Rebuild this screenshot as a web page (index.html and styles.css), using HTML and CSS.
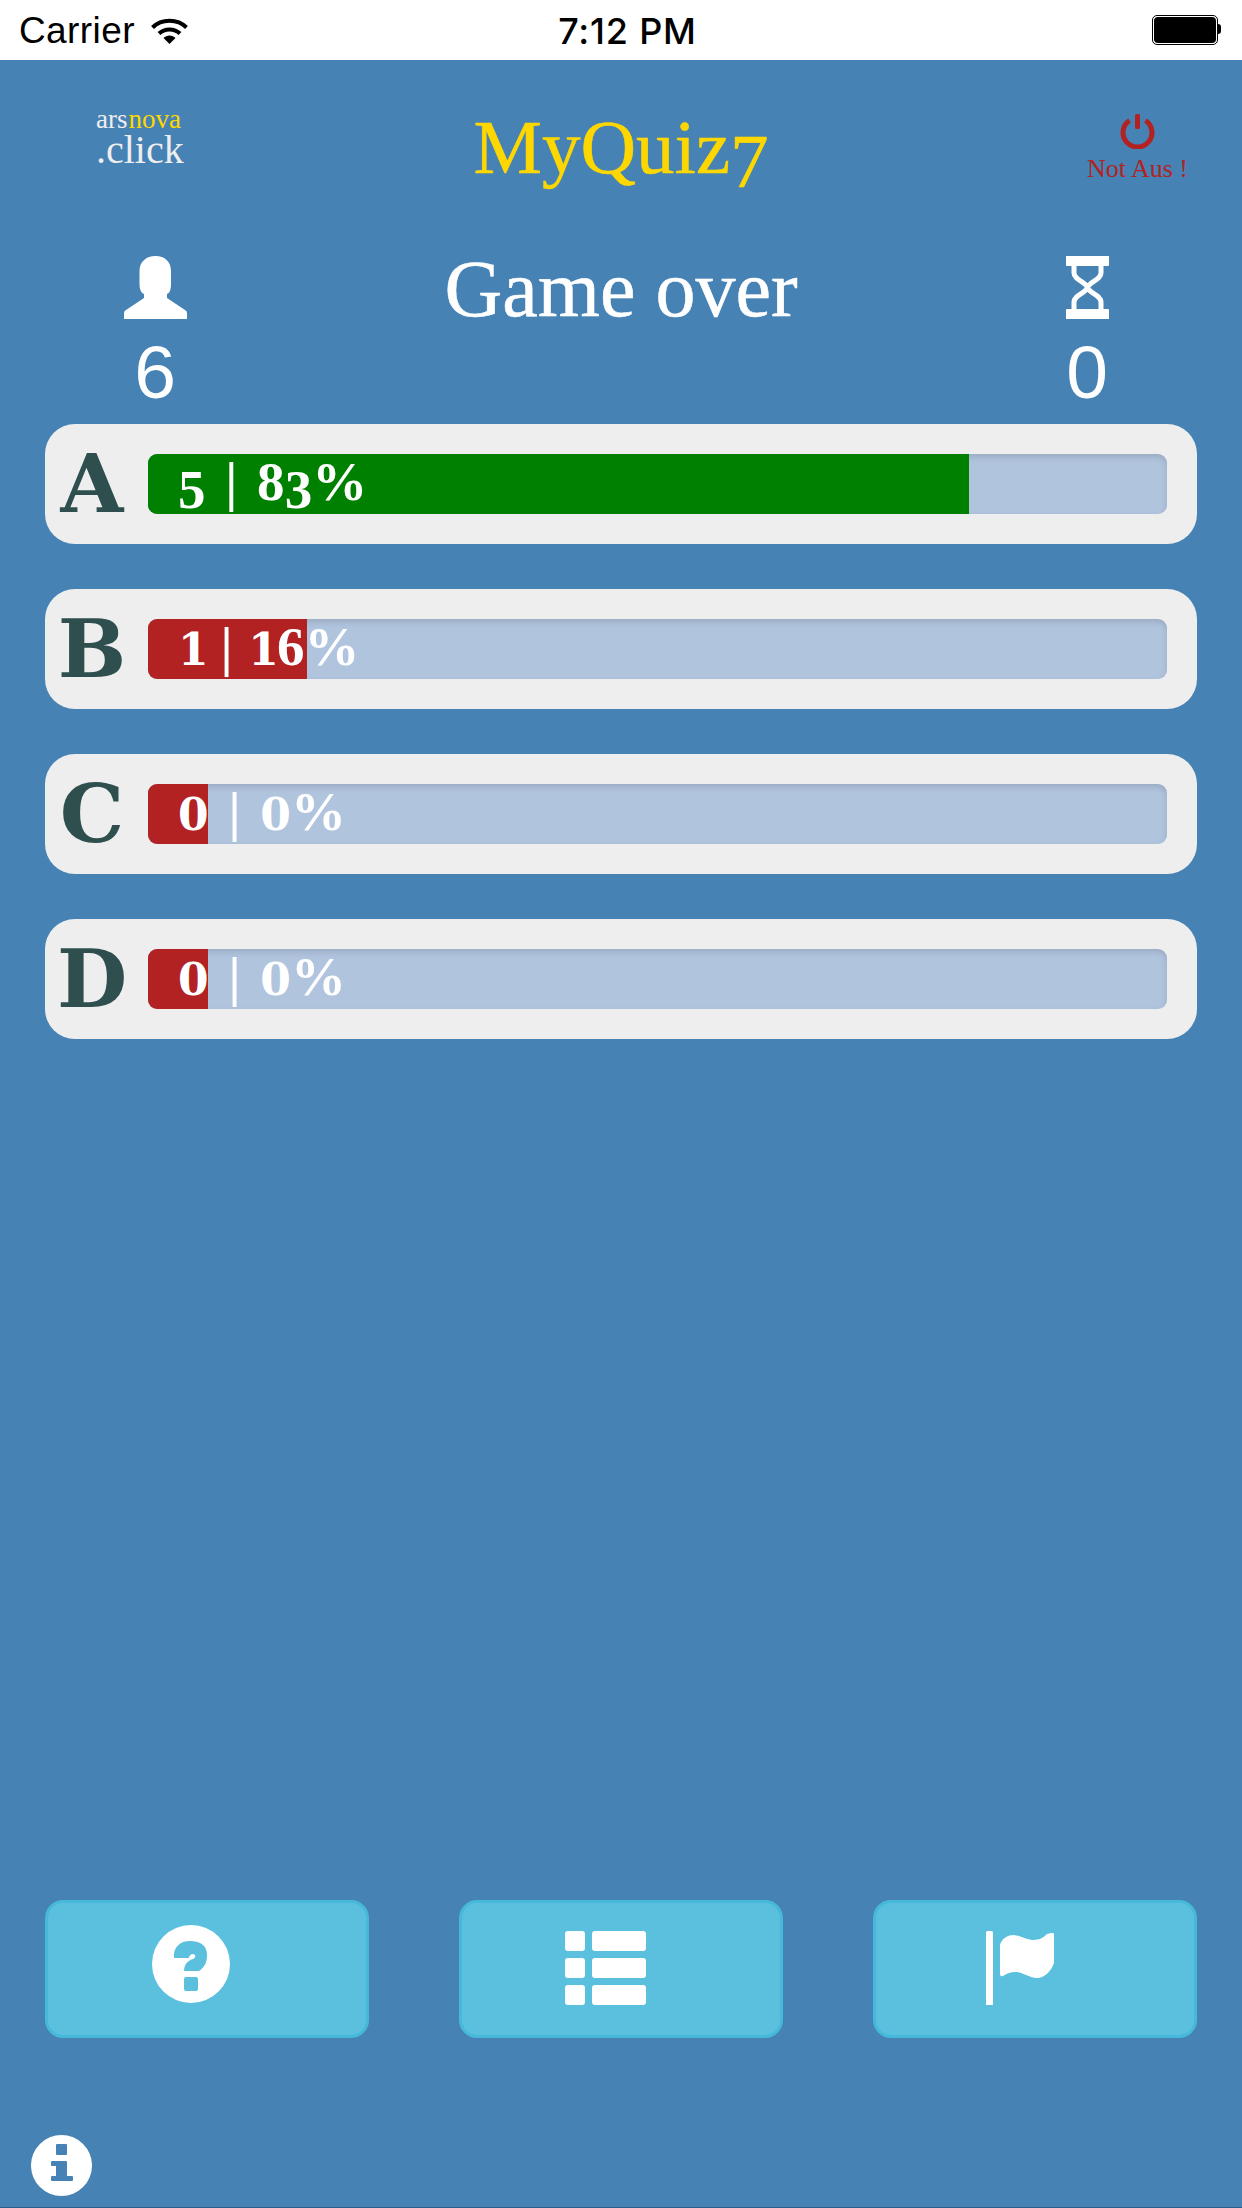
FILE: index.html
```html
<!DOCTYPE html>
<html lang="en">
<head>
    <meta charset="UTF-8">
    <meta name="viewport" content="width=device-width, initial-scale=1.0">
    <title>MyQuiz7</title>
    <link rel="stylesheet" href="styles.css">
</head>
<body>
    <div class="statusbar">
        <div class="carrier">
            <span>Carrier</span>
            <svg class="wifi" width="37" height="27" viewBox="0 0 37 27">
                <path d="M1.5 10.5C10.5 1.5 26.5 1.5 35.5 10.5" fill="none" stroke="#000" stroke-width="4"/>
                <path d="M8 16.5C13.5 11 23.5 11 29 16.5" fill="none" stroke="#000" stroke-width="4"/>
                <path d="M12.5 21C15.5 17.5 21.5 17.5 24.5 21L18.5 27Z" fill="#000"/>
            </svg>
        </div>
        <div class="time">7:12 PM</div>
        <div class="battery"><div class="battery-level"></div></div>
    </div>

    <div class="header">
        <div class="logo">
            <div class="logo-top">ars<span class="logo-nova">nova</span></div>
            <div class="logo-bottom">.click</div>
        </div>
        <h1 class="title">MyQuiz<span class="low-seven">7</span></h1>
        <div class="power">
            <svg width="35" height="35" viewBox="0 0 35 35">
                <path d="M9.5 6.5A14.5 14.5 0 1 0 25.5 6.5" fill="none" stroke="#b22222" stroke-width="5"/>
                <rect x="15" y="0" width="5" height="15" rx="1.5" fill="#b22222"/>
            </svg>
            <div class="power-text">Not Aus !</div>
        </div>
    </div>

    <div class="stats">
        <div class="stat">
            <svg width="63" height="63" viewBox="0 0 63 63">
                <path d="M31.5 0C41 0 47 6 47 15V28C47 33 46 37 43 38V42L61 54Q63 55 63 57V63H0V57Q0 55 2 54L20 42V38C17 37 15.5 33 15.5 28V15C15.5 6 22 0 31.5 0Z" fill="#fff"/>
            </svg>
            <div class="stat-value">6</div>
        </div>
        <h2 class="state">Game over</h2>
        <div class="stat">
            <svg width="43" height="63" viewBox="0 0 43 63">
                <path d="M0 0H43V9Q43 10 42 10H1Q0 10 0 9ZM0 54Q0 53 1 53H42Q43 53 43 54V63H0Z" fill="#fff"/>
                <path d="M8 9V17C8 24 20 26 21.500 31.500C23 37 35 39 35 46V54M35 9V17C35 24 23 26 21.500 31.500C20 37 8 39 8 46V54" fill="none" stroke="#fff" stroke-width="5"/>
            </svg>
            <div class="stat-value">0</div>
        </div>
    </div>

    <div class="answers">
        <div class="answer">
            <div class="letter">A</div>
            <div class="bar">
                <div class="fill fill-ok" style="width: 80.6%"></div>
                <div class="bar-text"><span class="low">5</span> | 8<span class="low">3</span>%</div>
            </div>
        </div>
        <div class="answer">
            <div class="letter">B</div>
            <div class="bar">
                <div class="fill fill-bad" style="width: 15.6%"></div>
                <div class="bar-text bar-text-tight"><span class="small small-first">1</span> | <span class="small small-second">1</span>6%</div>
            </div>
        </div>
        <div class="answer">
            <div class="letter">C</div>
            <div class="bar">
                <div class="fill fill-bad" style="width: 5.9%"></div>
                <div class="bar-text"><span class="small">0</span> | <span class="small">0</span>%</div>
            </div>
        </div>
        <div class="answer">
            <div class="letter">D</div>
            <div class="bar">
                <div class="fill fill-bad" style="width: 5.9%"></div>
                <div class="bar-text"><span class="small">0</span> | <span class="small">0</span>%</div>
            </div>
        </div>
    </div>

    <div class="buttons">
        <button class="btn btn-help">
            <svg width="78" height="78" viewBox="0 0 78 78">
                <path fill-rule="evenodd" fill="#fff" d="M39 0A39 39 0 1 0 39 78A39 39 0 1 0 39 0ZM22 33C21 22 28 16 38 16C49 16 55 21 55 30C55 37 53 42 47 46H32C32 40 35 36 41 34C44 33 44 29 41 29C39 29 38 30 37 32C37 33 36 33 35 33ZM34 52H44Q46 52 46 54V64Q46 66 44 66H34Q32 66 32 64V54Q32 52 34 52Z"/>
            </svg>
        </button>
        <button class="btn">
            <svg width="81" height="74" viewBox="0 0 81 74" fill="#fff">
                <rect x="0" y="0" width="20" height="20" rx="3"/>
                <rect x="27" y="0" width="54" height="20" rx="3"/>
                <rect x="0" y="27" width="20" height="20" rx="3"/>
                <rect x="27" y="27" width="54" height="20" rx="3"/>
                <rect x="0" y="54" width="20" height="20" rx="3"/>
                <rect x="27" y="54" width="54" height="20" rx="3"/>
            </svg>
        </button>
        <button class="btn btn-flag">
            <svg width="68" height="74" viewBox="0 0 68 74" fill="#fff">
                <path d="M1.5 0H5.5Q7 0 7 1.500V74H0V1.500Q0 0 1.500 0Z"/>
                <path d="M14 14C16 7 22 4 28 4C35 5 40 9 47 9C54 9 58 6 61 3Q68 1 68 3V32C65 40 59 47 51 47C43 47 37 41 30 41C24 41 20 43 17 45Q14 46 14 43Z"/>
            </svg>
        </button>
    </div>

    <div class="footer">
        <svg width="61" height="61" viewBox="0 0 61 61">
            <path fill-rule="evenodd" fill="#fff" d="M30.500 0A30.500 30.500 0 1 0 30.500 61A30.500 30.500 0 1 0 30.500 0ZM26 9H35Q36 9 36 10V19Q36 20 35 20H26Q25 20 25 19V10Q25 9 26 9ZM21 26H35Q36 26 36 27V41H41Q42 41 42 42V45Q42 46 41 46H21Q20 46 20 45V42Q20 41 21 41H25V31H21Q20 31 20 30V27Q20 26 21 26Z"/>
        </svg>
    </div>
</body>
</html>
```

FILE: styles.css
```css
body {
    margin: 0;
    width: 1242px;
    height: 2208px;
    display: flex;
    flex-direction: column;
    overflow: hidden;
    background-color: #4682b4;
    font-family: "Liberation Serif", serif;
    color: #fff;
}

/* status bar */
.statusbar {
    height: 60px;
    box-sizing: border-box;
    display: grid;
    grid-template-columns: 1fr auto 1fr;
    align-items: center;
    padding: 2px 17px 0 19px;
    background: #fff;
    color: #000;
    font-family: "Liberation Sans", sans-serif;
    font-size: 37px;
    letter-spacing: 0.4px;
}
.carrier {
    display: flex;
    align-items: center;
    gap: 16px;
}
.wifi {
    margin-top: -2px;
}
.time {
    margin-left: 11px;
    font-family: Inter, sans-serif;
    font-weight: 500;
    font-size: 36px;
    letter-spacing: 0.8px;
}
.battery {
    justify-self: end;
    width: 62px;
    height: 26px;
    border: 1px solid #000;
    border-radius: 5px;
    padding: 1px;
    margin: -2px 7px 0 0;
    position: relative;
}
.battery::after {
    content: "";
    position: absolute;
    left: 65px;
    top: 8px;
    width: 3px;
    height: 10px;
    background: #000;
    border-radius: 0 3px 3px 0;
}
.battery-level {
    height: 100%;
    background: #000;
    border-radius: 4px;
}

/* logo, title, power */
.header {
    height: 180px;
    display: grid;
    grid-template-columns: 1fr auto 1fr;
}
.logo {
    padding: 44px 0 0 96px;
    color: #eee;
}
.logo-top {
    font-size: 27px;
    line-height: 30px;
}
.logo-nova {
    color: #ffd700;
    margin-left: 1px;
}
.logo-bottom {
    font-size: 40px;
    line-height: 32px;
}
.title {
    margin: 0;
    padding-top: 42px;
    font-size: 77px;
    line-height: 90px;
    font-weight: normal;
    color: #ffd700;
    -webkit-text-stroke: 0.5px #ffd700;
}
.low-seven {
    vertical-align: -14px;
    line-height: 0;
}
.power {
    justify-self: end;
    padding: 54px 54px 0 0;
    display: flex;
    flex-direction: column;
    align-items: center;
    color: #b22222;
}
.power-text {
    margin-top: 6px;
    font-size: 26px;
    line-height: 28px;
}

/* players, state, time */
.stats {
    height: 184px;
    padding: 0 46px;
    display: grid;
    grid-template-columns: 218px 1fr 218px;
}
.stat {
    padding-top: 16px;
    display: flex;
    flex-direction: column;
    align-items: center;
}
.stat-value {
    margin-top: 13px;
    font-family: "Liberation Sans", sans-serif;
    font-size: 75px;
    line-height: 80px;
}
.state {
    margin: 0;
    padding-top: 4px;
    text-align: center;
    font-size: 80px;
    line-height: 90px;
    font-weight: normal;
    -webkit-text-stroke: 0.5px #fff;
}

/* answers */
.answers {
    flex: 1;
    padding: 0 45px;
}
.answer {
    height: 120px;
    margin-bottom: 45px;
    padding-right: 30px;
    display: flex;
    align-items: center;
    background: #eee;
    border-radius: 30px;
}
.letter {
    width: 103px;
    padding-right: 9px;
    box-sizing: border-box;
    text-align: center;
    font-family: "DejaVu Serif", serif;
    font-size: 81px;
    line-height: 100px;
    font-weight: bold;
    color: #2f4f4f;
}
.bar {
    flex: 1;
    height: 60px;
    position: relative;
    background: #b0c4de;
    border-radius: 9px;
    box-shadow: inset 0 3px 6px rgba(0, 0, 0, 0.13);
}
.fill {
    height: 100%;
    border-radius: 9px 0 0 9px;
}
.fill-ok {
    background: #008000;
}
.fill-bad {
    background: #b22222;
}
.bar-text {
    position: absolute;
    left: 30px;
    top: 0;
    font-size: 55px;
    line-height: 55px;
    font-weight: bold;
    word-spacing: 6px;
    white-space: nowrap;
}
.bar-text-tight {
    word-spacing: 2px;
}
.low {
    vertical-align: -8px;
    line-height: 0;
}
.small {
    font-family: "DejaVu Serif", serif;
    font-size: 44px;
    line-height: 0;
}
.small-first {
    letter-spacing: -4px;
}
.small-second {
    letter-spacing: -2px;
}

/* bottom buttons */
.buttons {
    padding: 0 45px;
    display: flex;
    justify-content: space-between;
}
.btn {
    width: 324px;
    height: 138px;
    padding: 0 32px 2px 0;
    display: flex;
    align-items: center;
    justify-content: center;
    background: #5bc0de;
    border: 3px solid #46b8da;
    border-radius: 18px;
}
.btn-help {
    padding-bottom: 10px;
}
.btn-flag {
    padding-right: 30px;
}

.footer {
    height: 170px;
    box-sizing: border-box;
    padding: 97px 0 0 31px;
    border-bottom: 1px solid #2b5f8c;
}
.footer svg {
    display: block;
}
```
